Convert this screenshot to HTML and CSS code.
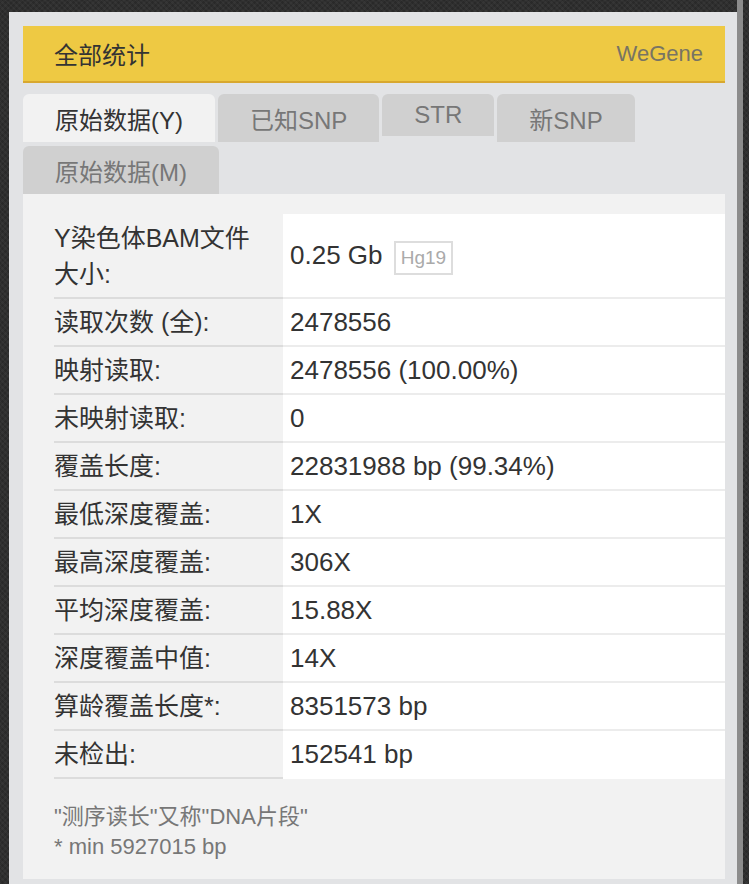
FILE: index.html
```html
<!DOCTYPE html>
<html lang="zh-CN">
<head>
  <meta charset="UTF-8" />
  <meta name="viewport" content="width=device-width, initial-scale=1.0"/>
  <title>全部统计</title>
  <link rel="stylesheet" href="styles.css">
</head>
<body>
  <div class="page">
    <div class="panel">
      <header class="title-bar">
        <h1>全部统计</h1>
        <span class="brand">WeGene</span>
      </header>

      <nav class="tabs">
        <a class="tab active" href="#">原始数据(Y)</a>
        <a class="tab" href="#">已知SNP</a>
        <a class="tab tab-short" href="#">STR</a>
        <a class="tab" href="#">新SNP</a>
        <a class="tab" href="#">原始数据(M)</a>
      </nav>

      <div class="tab-body">
        <table class="stats">
          <tr>
            <th>Y染色体BAM文件大小:</th>
            <td>0.25 Gb <span class="badge">Hg19</span></td>
          </tr>
          <tr>
            <th>读取次数 (全):</th>
            <td>2478556</td>
          </tr>
          <tr>
            <th>映射读取:</th>
            <td>2478556 (100.00%)</td>
          </tr>
          <tr>
            <th>未映射读取:</th>
            <td>0</td>
          </tr>
          <tr>
            <th>覆盖长度:</th>
            <td>22831988 bp (99.34%)</td>
          </tr>
          <tr>
            <th>最低深度覆盖:</th>
            <td>1X</td>
          </tr>
          <tr>
            <th>最高深度覆盖:</th>
            <td>306X</td>
          </tr>
          <tr>
            <th>平均深度覆盖:</th>
            <td>15.88X</td>
          </tr>
          <tr>
            <th>深度覆盖中值:</th>
            <td>14X</td>
          </tr>
          <tr>
            <th>算龄覆盖长度*:</th>
            <td>8351573 bp</td>
          </tr>
          <tr>
            <th>未检出:</th>
            <td>152541 bp</td>
          </tr>
        </table>

        <div class="notes">
          <p>"测序读长"又称"DNA片段"</p>
          <p>* min 5927015 bp</p>
        </div>
      </div>
    </div>
    <div class="rail"></div>
  </div>
</body>
</html>
```

FILE: styles.css
```css
html, body {
  margin: 0;
  padding: 0;
}

body {
  font-family: "Liberation Sans", "Noto Sans CJK SC", sans-serif;
  color: #333;
  background-color: #2f2f2f;
  background-image:
    repeating-linear-gradient(45deg, rgba(255, 255, 255, 0.03) 0 2px, transparent 2px 4px),
    repeating-linear-gradient(-45deg, rgba(0, 0, 0, 0.12) 0 2px, transparent 2px 4px);
}

.page {
  display: flex;
  min-height: 884px;
  padding-left: 9px;
}

.panel {
  width: 728px;
  margin-top: 12px;
  padding: 14px 12px 5px 14px;
  box-sizing: border-box;
  background: #e2e3e5;
  display: flex;
  flex-direction: column;
}

.rail {
  width: 6px;
  background: #8c8c8c;
}

/* yellow title bar */
.title-bar {
  display: flex;
  align-items: center;
  justify-content: space-between;
  height: 55px;
  padding: 0 22px 0 31px;
  background: #eec943;
  border-bottom: 2px solid #d8a82f;
}

.title-bar h1 {
  margin: 0;
  font-size: 24px;
  font-weight: normal;
  color: #333;
}

.brand {
  font-size: 22px;
  color: #787463;
}

/* tabs */
.tabs {
  display: flex;
  flex-wrap: wrap;
  align-items: flex-start;
  gap: 4px 3px;
  margin-top: 11px;
}

.tab {
  display: flex;
  align-items: center;
  height: 48px;
  padding: 0 32px;
  background: #d0d0d0;
  border-radius: 6px 6px 0 0;
  font-size: 24px;
  color: #777;
  text-decoration: none;
}

.tab.active {
  background: #f2f2f2;
  color: #333;
}

.tab-short {
  height: 42px;
}

/* tab content */
.tab-body {
  flex: 1;
  background: #f2f2f2;
  padding: 20px 0 0 31px;
}

.stats {
  width: 100%;
  border-collapse: collapse;
}

.stats th,
.stats td {
  padding: 5px 0;
  line-height: 36px;
  text-align: left;
  vertical-align: middle;
}

.stats th {
  width: 229px;
  padding-right: 20px;
  box-sizing: border-box;
  font-size: 25px;
  font-weight: normal;
  border-bottom: 2px solid #dcdcdc;
}

.stats td {
  padding-left: 7px;
  font-size: 26px;
  background: #fff;
  border-bottom: 2px solid #ececec;
}

.stats tr:first-child th,
.stats tr:first-child td {
  padding-top: 6px;
  padding-bottom: 5px;
}

.stats tr:last-child td {
  border-bottom-color: #fff;
}

.badge {
  display: inline-block;
  margin-left: 4px;
  padding: 0 5px;
  line-height: 30px;
  font-size: 19px;
  color: #aaa;
  border: 2px solid #ddd;
  vertical-align: middle;
}

.notes {
  margin-top: 23px;
  font-size: 22px;
  line-height: 30px;
  color: #777;
}

.notes p {
  margin: 0;
}
```
